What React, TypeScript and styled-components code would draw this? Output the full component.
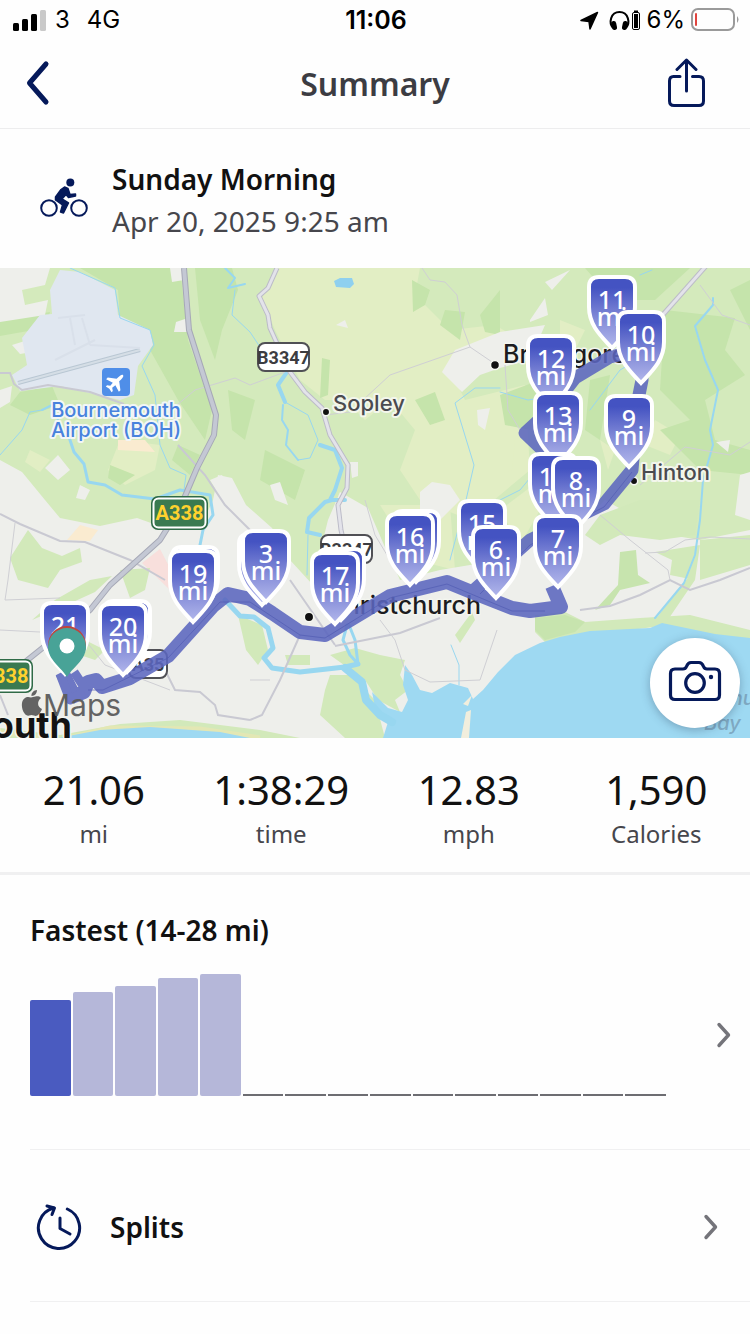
import React from "react";
import styled, { createGlobalStyle } from "styled-components";

const NAVY = "#05195a";
const UI = `"Noto Sans", "Open Sans", sans-serif`;
const SYS = `Inter, "Liberation Sans", sans-serif`;
const ROAD = `"Liberation Sans Narrow", Roboto, sans-serif`;

const GlobalStyle = createGlobalStyle`
  * { box-sizing: border-box; }
  body { margin: 0; background: #fefefe; font-family: ${UI}; color: #111; }
  h1, h2, p, dl, dd, dt { margin: 0; }
  button { border: 0; padding: 0; background: none; font: inherit; color: inherit; cursor: pointer; }
`;

const Screen = styled.main`
  min-height: 100vh;
  background: #fefefe;
`;

const StatusBar = styled.div`
  display: grid;
  grid-template-columns: 1fr auto 1fr;
  align-items: center;
  height: 40px;
  padding: 0 11px 0 13px;
  font: 400 24px/40px ${SYS};
  color: #000;
`;
const StatusSide = styled.div<{ $end?: boolean }>`
  display: flex;
  align-items: center;
  justify-content: ${(p) => (p.$end ? "flex-end" : "flex-start")};
  gap: ${(p) => (p.$end ? 6 : 9)}px;
`;
const Network = styled.span`
  margin-left: 8px;
`;
const Clock = styled.time`
  font-weight: 600;
  font-size: 25px;
`;

const Header = styled.header`
  display: grid;
  grid-template-columns: 1fr auto 1fr;
  align-items: center;
  height: 89px;
  padding: 0 26px;
  border-bottom: 1px solid #ededee;
`;
const Title = styled.h1`
  font-size: 32px;
  line-height: 44px;
  font-weight: 600;
  color: #3c3c42;
`;
const IconButton = styled.button<{ $end?: boolean }>`
  display: flex;
  justify-self: ${(p) => (p.$end ? "end" : "start")};
  && { margin-right: ${(p) => (p.$end ? 19 : 0)}px; }
`;

const Activity = styled.section`
  display: flex;
  align-items: center;
  gap: 24px;
  height: 139px;
  padding: 2px 40px 0;
`;
const ActivityName = styled.h2`
  font-size: 28px;
  line-height: 42px;
  font-weight: 600;
`;
const ActivityDate = styled.p`
  font-size: 28px;
  line-height: 42px;
  color: #46464c;
`;

const MapPanel = styled.section`
  position: relative;
  overflow: hidden;
`;
const MapArt = styled.svg`
  display: block;
  width: 100%;
  height: auto;
`;
const CameraButton = styled.button`
  position: absolute;
  right: 10px;
  bottom: 10px;
  display: flex;
  align-items: center;
  justify-content: center;
  width: 90px;
  height: 90px;
  && { background: #fff; padding-bottom: 4px; }
  border-radius: 50%;
  box-shadow: 0 2px 10px rgba(40, 60, 90, 0.35);
`;

const Stats = styled.dl`
  display: grid;
  grid-template-columns: repeat(4, 1fr);
  padding: 26px 0 20px;
  border-bottom: 3px solid #f0f0f1;
`;
const Stat = styled.div`
  display: flex;
  flex-direction: column-reverse;
  text-align: center;
`;
const StatValue = styled.dd`
  font-size: 40px;
  line-height: 52px;
`;
const StatLabel = styled.dt`
  font-size: 24px;
  line-height: 36px;
  color: #46464c;
`;

const Fastest = styled.section`
  margin-left: 30px;
  padding: 34px 18px 53px 0;
  border-bottom: 1px solid #f0f0f1;
`;
const SectionTitle = styled.h2`
  font-size: 28px;
  line-height: 42px;
  font-weight: 600;
`;
const ChartButton = styled.button`
  display: flex;
  align-items: center;
  justify-content: space-between;
  width: 100%;
  && { margin-top: 23px; }
`;
const Bars = styled.span`
  display: flex;
  align-items: flex-end;
  gap: 2px;
  flex: 1;
  height: 122px;
  margin-right: 50px;
`;
const Bar = styled.span<{ $tone: "best" | "past" | "empty" }>`
  flex: 1;
  border-radius: ${(p) => (p.$tone === "empty" ? 0 : 2)}px;
  background: ${(p) => ({ best: "#4a5bc0", past: "#b5b7d9", empty: "#6d6d72" })[p.$tone]};
`;

const SplitsRow = styled.button`
  display: flex;
  align-items: center;
  gap: 26px;
  width: calc(100% - 30px);
  height: 152px;
  margin-left: 30px;
  && { padding: 2px 31px 0 6px; border-bottom: 1px solid #f0f0f1; }
  text-align: left;
`;
const RowLabel = styled.span`
  flex: 1;
  font-size: 28px;
  line-height: 42px;
  font-weight: 600;
`;

const bars = [96, 104, 110, 118, 122, 2, 2, 2, 2, 2, 2, 2, 2, 2, 2];
const stats = [
  ["21.06", "mi"],
  ["1:38:29", "time"],
  ["12.83", "mph"],
  ["1,590", "Calories"],
];

const Chevron = () => (
  <svg width="16" height="26" viewBox="0 0 16 26" fill="none" stroke="#74747a" strokeWidth="3.4" strokeLinecap="round" strokeLinejoin="round" aria-hidden="true">
    <path d="M3 2.5 L12.5 13 L3 23.5" />
  </svg>
);

/* Mile markers, back to front: label, centre x, top y. Covered markers carry no label. */
const pins: [string, number, number][] = [
  ["11", 612, 275], ["12", 551, 334], ["10", 641, 310], ["13", 558, 391],
  ["14", 553, 452], ["8", 576, 456], ["9", 629, 394], ["7", 558, 514],
  ["15", 482, 499], ["6", 496, 525], ["", 416, 509], ["16", 410, 512],
  ["", 341, 547], ["17", 335, 551], ["", 262, 532], ["3", 266, 529],
  ["", 195, 545], ["19", 193, 549], ["", 127, 599], ["20", 123, 602],
  ["21", 65, 601],
];

const Pin = ({ label, x, y }: { label: string; x: number; y: number }) => (
  <g transform={`translate(${x - 25} ${y})`}>
    <path d="M12 2 H38 Q48 2 48 12 V32 C48 51 35 62 25 73 C15 62 2 51 2 32 V12 Q2 2 12 2Z" fill="url(#pin)" stroke="#fff" strokeWidth="4" />
    {label && (
      <g fill="#fff" fontFamily={UI} fontWeight="500" textAnchor="middle" fontSize="25">
        <text x="25" y="34">{label}</text>
        <text x="25" y="51">mi</text>
      </g>
    )}
  </g>
);

type Plate = { x: number; y: number; w: number; h: number; label: string };

const ARoad = ({ x, y, w, h, label }: Plate) => (
  <g>
    <rect x={x} y={y} width={w} height={h} rx="7" fill="#2f6b47" />
    <rect x={x + 2.5} y={y + 2.5} width={w - 5} height={h - 5} rx="5" fill="#3a7a50" stroke="#fff" strokeWidth="2" />
    <text x={x + w / 2} y={y + h / 2 + 7} textAnchor="middle" fontFamily={ROAD} fontWeight="700" fontSize="20" fill="#ffd22e">{label}</text>
  </g>
);

const BRoad = ({ x, y, w, h, label }: Plate) => (
  <g>
    <rect x={x} y={y} width={w} height={h} rx="7" fill="#fff" stroke="#505055" strokeWidth="2" />
    <text x={x + w / 2} y={y + h / 2 + 7} textAnchor="middle" fontFamily={ROAD} fontWeight="700" fontSize="18" fill="#3c3c40">{label}</text>
  </g>
);

const RouteMap = () => (
  <MapArt viewBox="0 268 750 470" role="img" aria-label="Route map">
    <defs>
      <linearGradient id="pin" x1="0" y1="0" x2="0" y2="1">
        <stop offset="0.15" stopColor="#4453c2" />
        <stop offset="0.6" stopColor="#848cd8" />
        <stop offset="1" stopColor="#b3b8ec" />
      </linearGradient>
    </defs>
    <rect y="268" width="750" height="470" fill="#d4eabc" />

    {/* Meadows */}
    <g fill="#e2eec4">
      <path d="M275 268 H420 L415 295 L450 330 L430 340 L380 345 L375 362 L345 360 L340 305 L345 302 L390 308 L395 340 L450 330 L495 325 L520 340 L450 370 L465 400 L525 385 L530 470 L470 520 L420 500 L400 470 L415 430 L390 400 L365 420 L345 400 L325 400 L300 380 L275 330 L262 298Z" />
      <path d="M120 440 L160 445 L155 470 L125 485 L108 470Z M30 450 L50 460 L40 472 L25 462Z" />
      <path d="M380 505 H450 L455 570 L415 560Z M500 510 L540 480 L540 510 L520 545Z" />
      <path d="M560 320 L585 330 L575 350 L560 345Z M655 420 L680 435 L670 455 L645 445Z M500 430 L515 440 L512 470 L500 475Z M600 440 L615 450 L608 470Z" />
    </g>

    {/* Woodland */}
    <g fill="#c5e4ab">
      <path d="M80 268 H180 L188 340 L212 410 L205 440 L178 400 L150 350 L150 330 L120 318 L118 290Z" />
      <path d="M195 268 H232 L238 290 L222 330 L215 360 L200 320Z M0 320 L50 312 L45 328 L0 336Z" />
      <path d="M20 392 L52 386 L60 405 L30 415 L10 405Z M110 465 L135 475 L120 485 L108 478Z M178 445 L200 455 L190 475 L172 460Z" />
      <path d="M322 358 L330 360 L328 395 L320 398Z M415 400 L435 392 L445 420 L430 425Z" />
      <path d="M412 280 L430 290 L425 305 L413 312Z M445 310 L465 312 L460 340 L440 325Z M480 315 L500 290 V335 L485 332Z M265 450 L305 470 L295 500 L260 480Z" />
      <path d="M585 268 H690 L655 300 L610 300 L600 285Z M665 310 L735 318 L725 350 L745 375 L705 400 L715 440 L750 450 V475 L700 470 L660 430 L690 420 L660 390Z" />
      <path d="M500 395 L540 380 L530 430 L505 425Z M730 290 L750 280 V330Z M590 380 L610 375 L600 440 L585 430Z" />
      <path d="M255 400 L245 440 L232 430 L228 390Z M225 490 L240 510 L232 500Z" />
    </g>

    {/* Built-up land */}
    <g fill="#eeefeb">
      <path d="M0 460 L22 472 L45 500 L60 518 L100 526 L137 518 L165 528 L200 528 L213 500 L218 475 L232 478 L246 505 L272 528 L290 560 L312 584 L328 520 L340 492 L368 508 L384 545 L400 580 L440 570 L500 560 L585 520 L605 500 L640 520 L670 535 L700 540 L750 530 V738 H0Z" />
      <path d="M0 268 H50 L45 285 L22 290 L25 305 L48 300 L45 315 L0 322Z M170 268 H184 V280 L172 282Z M176 322 L188 318 V332 L174 332Z M12 345 L28 340 L32 352 L20 354Z M0 390 L12 386 L10 402 L0 408Z M45 468 L58 455 L70 470 L58 480Z M210 480 L222 475 L232 495 L225 505Z M80 485 L90 490 L85 500 L76 498Z" />
      <path d="M442 372 L455 350 L500 332 L545 325 L530 360 L500 368 L480 375 L462 392Z M545 282 L570 270 L552 290Z M530 320 L545 298 L548 315 L530 322Z M420 492 L432 482 L450 485 L460 500 L440 520 L420 512Z M336 325 L345 320 L348 328Z M477 410 L490 408 L485 430 L478 425Z M716 442 L730 440 L728 452Z M740 475 L750 472 V520 L735 515Z M270 485 L280 482 L288 505 L275 500Z M350 462 L358 462 L358 476 L352 478Z" />
    </g>
    <path d="M80 525 L98 530 L90 541 L67 540Z M118 440 L145 440 L155 452 L118 450Z" fill="#faebd0" />
    <path d="M142 563 L160 549 L172 572 L170 590Z" fill="#f8dfdc" />

    {/* Parks inside the towns */}
    <g fill="#d2e9ba">
      <path d="M10 558 L28 530 L42 548 L62 556 L80 548 L82 562 L60 570 L48 588 L18 580Z M55 600 L90 580 L112 576 L95 592 L60 608 L32 620Z M120 570 L150 568 L145 590 L130 598Z M85 640 L105 650 L95 660 L80 655Z" />
      <path d="M0 738 V728 L60 735 L120 724 L180 720 L260 730 L300 738Z" />
      <path d="M238 615 L262 625 L268 650 L258 665 L246 650Z M285 655 L310 655 V665 L288 665Z M330 655 L355 648 L380 655 L405 660 L400 675 L408 690 L395 700 L400 712 L378 700 L365 680Z M325 690 L330 675 L350 675 L375 700 L385 738 H345 L320 715Z" />
      <path d="M600 515 L640 500 H700 L695 535 L660 540 L620 535 L600 545 L585 535Z M655 552 L700 545 L695 580 L670 575 L672 560Z M700 540 L750 535 V565 L700 580Z" />
      <path d="M535 615 L565 612 L585 622 L640 618 L690 615 L750 630 V640 L660 626 L545 642 L535 632Z" />
      <path d="M455 635 L472 612 L475 620 L460 643Z M690 575 L655 620 L665 624 L695 580Z" />
    </g>
    <path d="M620 552 L636 550 L638 575 L650 583 L620 590 L610 605 L595 610 L618 585Z M535 618 L565 615 L585 622 L575 632 L545 640 L535 630Z" fill="#c7e4ae" />
    <path d="M0 732 L60 740 L110 728 L200 729 L260 738" stroke="#e3e7b4" strokeWidth="5" fill="none" />

    {/* Airport */}
    <path d="M60 270 L80 272 L115 290 L118 315 L150 330 L153 345 L138 366 L134 395 L120 400 L60 386 L20 391 L12 375 L27 365 L22 338 L40 315 L52 314 L50 290Z" fill="#e0e7f0" />
    <path d="M18 383 L140 350" stroke="#b9c7d3" strokeWidth="4" />
    <path d="M18 383 L140 350" stroke="#d5dee6" strokeWidth="2" />
    <path d="M58 318 L85 315 M70 318 L75 345 M82 318 L90 345 M55 360 L95 340 M90 345 L140 348" stroke="#d9e0ea" strokeWidth="2" fill="none" />

    {/* Sea, harbour and rivers */}
    <path d="M750 638 L715 634 L662 623 L650 628 L590 631 L560 637 L540 643 L515 655 L498 672 L483 690 L473 699 L468 688 L450 683 L432 693 L420 690 L412 675 L405 665 L403 685 L408 700 L402 712 L388 708 L372 692 L376 712 L388 722 L383 738 H750Z" fill="#9ed9f2" />
    <path d="M58 738 L100 730 L150 727 L220 732 L250 738Z" fill="#9ed9f2" />
    <g fill="none" stroke="#98d7f0" strokeLinejoin="round" strokeLinecap="round">
      <path strokeWidth="8" d="M345 668 L362 682 L366 700 L380 715 L392 722" />
      <path strokeWidth="5" d="M225 600 L240 616 L254 617 L268 628 L273 648 L264 658 L272 668 L300 672 L345 667 L358 664" />
      <path strokeWidth="3" d="M70 440 L74 452 L84 464 L88 482 L105 485 L122 495 L155 499 L180 490 L210 495 L213 515 L203 530 L200 545 M347 625 L343 640 L350 655 L358 664 L355 640 L349 625" />
      <path strokeWidth="4" d="M345 500 L332 500 L325 502 L309 518 L307 532 L320 535 M287 372 L278 385 L285 402 M320 445 L335 450 L342 468 L335 490 L330 500" />
      <path strokeWidth="1" d="M285 402 L308 415 L318 440 L310 458 L298 460 M308 535 L307 575 M0 455 L22 430 L30 412 L42 410 M70 268 L115 288 L120 318 L150 330 L154 345 L142 366 L155 395 L160 445 L170 468 L186 475 L184 490" />
      <path strokeWidth="2" d="M283 405 L282 420 L288 430 L286 445 L298 460 M42 410 L52 405 L60 425 L70 440 M225 268 L235 278 L228 288 L245 284" />
      <path strokeWidth="1" d="M235 290 L232 315 L250 332 L262 350 M500 388 L475 388 L455 403 L474 465 L466 500 L450 560 M500 392 L528 400 L560 395 M655 350 L620 370 L590 410 M640 275 L652 270 M451 645 L459 665 V685 M500 500 L520 490 L530 478" />
      <path strokeWidth="2" d="M713 298 L713 305 L695 326 L705 360 L718 390 L710 430 L713 445 L703 480 L700 520 L695 555 L684 583 L655 618" />
    </g>
    <path d="M334 281 L340 278 H352 L354 284 L350 288 L336 287Z" fill="#8fd0ef" />
    <path d="M461 738 L466 712 L471 710 L469 738Z M463 704 L472 695 L468 706Z" fill="#f1eedd" />

    {/* Minor roads */}
    <g fill="none" stroke="#c9c9d2" strokeWidth="2">
      <path d="M0 373 L10 373 L14 384 L22 390 L48 385 L90 392 L124 404 M0 514 L20 524 L60 541 L85 542 L130 560 L165 580 M178 445 L205 475 L225 505 L250 530 M290 580 L335 645" />
      <path d="M0 695 L8 715 M160 660 L175 690 L200 692 L215 705 L218 715 L250 720" />
      <path d="M250 720 L262 715 L280 680 L300 635 M335 646 L400 633 L440 618 M580 610 L610 606 L640 595 L670 580 L690 590 L720 580 L750 568" />
    </g>
    <g fill="none" stroke="#cfcfd4" strokeWidth="1">
      <path d="M165 415 L195 390 L235 378 L250 385 L285 372 M15 523 L8 580 L5 600 L60 598 M0 630 L40 632 M85 640 L105 665 L170 690 M250 680 H270" />
      <path d="M325 415 L350 412 L390 375 L470 347 L495 364 M422 268 L430 280 L445 282 L457 295 L462 325 L470 347" />
      <path d="M600 515 L630 540 L668 570 L670 580 M645 553 L665 552 L685 540 L710 537 L750 539" />
      <path d="M365 500 L375 535 L390 560 L410 585 M380 620 L395 640 L405 670 L430 682 L480 680 L497 630" />
      <path d="M700 285 L722 315 L750 325 M640 485 L685 447 L730 455 L750 442 M505 365 L508 410 L520 430" />
    </g>

    {/* Main roads */}
    <g fill="none" strokeLinejoin="round">
      <path d="M277 268 L268 288 L259 296 L268 315 L270 328 L290 372 L305 392 L322 408 L330 435 L348 465 L347 488 L338 505 L341 530 L348 560" stroke="#bcbcc8" strokeWidth="5" />
      <path d="M277 268 L268 288 L259 296 L268 315 L270 328 L290 372 L305 392 L322 408 L330 435 L348 465 L347 488 L338 505 L341 530 L348 560" stroke="#e3e3ea" strokeWidth="3" />
      <path d="M706 266 L660 318" stroke="#bcbcc8" strokeWidth="5" />
      <path d="M706 266 L660 318" stroke="#e3e3ea" strokeWidth="3" />
      <path d="M184 268 L189 330 L216 415 L214 435 L197 468 L180 508 L160 540 L110 585 L90 610 L40 650 L0 682" stroke="#a6a8b6" strokeWidth="6" />
      <path d="M184 268 L189 330 L216 415 L214 435 L197 468 L180 508 L160 540 L110 585 L90 610 L40 650 L0 682" stroke="#c4c8d4" strokeWidth="4" />
    </g>

    {/* Place names and road numbers */}
    <rect x="102" y="368" width="28" height="28" rx="4" fill="#4f8ee8" />
    <path transform="translate(116 382) rotate(45) scale(0.9)" d="M0 -11 C1.6 -11 2 -8.5 2 -6 V-3 L10 3 V5.5 L2 3 L1.5 7.5 L4.500 9.5 V11.5 L0 10.5 L-4.5 11.5 V9.5 L-1.5 7.5 L-2 3 L-10 5.5 V3 L-2 -3 V-6 C-2 -8.5 -1.6 -11 0 -11Z" fill="#fff" />
    <g fontFamily={SYS} strokeLinejoin="round" paintOrder="stroke">
      <g fontSize="20" fontWeight="500" fill="#4882dd" stroke="#f2f6f6" strokeWidth="4" textAnchor="middle">
        <text x="116" y="417">Bournemouth</text>
        <text x="116" y="437">Airport (BOH)</text>
      </g>
      <g fontSize="22" fontWeight="500" fill="#4b4b50" stroke="#f3f6ec" strokeWidth="4">
        <text x="333" y="411">Sopley</text>
        <text x="641" y="480">Hinton</text>
      </g>
      <g fontSize="25" fontWeight="500" fill="#1c1c1e" stroke="#f3f5ef" strokeWidth="3">
        <text x="503" y="363">Bransgore</text>
        <text x="481" y="614" textAnchor="end">Christchurch</text>
      </g>
      <g fontSize="20" fontStyle="italic" fontWeight="500" fill="#7fa9c2">
        <text x="662" y="705">Christchurch</text>
        <text x="704" y="730">Bay</text>
      </g>
      <text x="72" y="738" fontSize="36" fontWeight="700" fill="#121212" stroke="#f3f5ef" strokeWidth="3" textAnchor="end">Bournemouth</text>
    </g>
    <g fill="#111" stroke="#f6f8f2" strokeWidth="1.5">
      <circle cx="495" cy="365" r="4.5" />
      <circle cx="326" cy="412" r="3.7" />
      <circle cx="634" cy="481" r="3.7" />
      <circle cx="309" cy="617" r="4.7" />
    </g>
    <BRoad x={258} y={343} w={51} h={28} label="B3347" />
    <BRoad x={321} y={535} w={51} h={28} label="B3347" />
    <BRoad x={129} y={650} w={38} h={28} label="A35" />
    <ARoad x={151} y={496} w={57} h={34} label="A338" />
    <ARoad x={-24} y={659} w={57} h={34} label="A338" />

    {/* Ridden track */}
    <g opacity="0.88" fill="none" stroke="#5c67bf" strokeLinejoin="round">
      <path strokeWidth="14" d="M62 672 L74 696 L84 692 L88 682 L96 680 L102 687 L130 678 L168 656 L213 606 L228 594 L250 599 L272 613 L300 632 L325 635 L355 617 L390 596 L447 582 L474 593 L512 608 L530 611 L561 607 L552 586" />
      <path strokeWidth="13" d="M474 590 L530 540 L575 518 L604 504 L632 470 L638 400 L642 380 L641 350 L610 357 L575 378 L550 410 L525 433 L548 455 L555 520" />
      <path strokeWidth="9" d="M60 674 L70 700 L84 692 M86 690 L74 672" />
    </g>
    <g fill="none" stroke="#525db4" strokeWidth="1" opacity="0.7">
      <path d="M88 690 L103 690 L168 658 L220 602 L250 602 L300 635 L325 638 L390 598 L447 584 L512 611 L545 611" />
      <path d="M480 594 L530 545 L604 507 L632 472" />
    </g>

    {pins.map(([label, x, y]) => (
      <Pin key={`${x}-${y}`} label={label} x={x} y={y} />
    ))}

    {/* Start and finish */}
    <path d="M67 675 C62 666 48 658 48 645 A19 19 0 0 1 86 645 C86 658 72 666 67 675Z" fill="#c0453c" />
    <path d="M67 677 C62 668 48 660 48 647 A19 19 0 0 1 86 647 C86 660 72 668 67 677Z" fill="#48a397" />
    <circle cx="67" cy="646" r="7.5" fill="#fff" />

    {/* Map provider mark */}
    <g fill="#5c5c5c" opacity="0.95">
      <path d="M33 697 C36 697 38 695 41 698 C37 701 37 707 42 709 C40 714 37 717 34 715.5 C32 714.7 31 714.7 29 715.5 C25 717 21 709 22 703 C23 697 28 696 31 697.5Z M31.5 696 C31 693 34 690 37 690 C37 693 35 696 31.5 696Z" />
      <text x="43" y="716" fontFamily={SYS} fontSize="30">Maps</text>
    </g>
  </MapArt>
);

export default function App() {
  return (
    <>
      <GlobalStyle />
      <Screen>
        <StatusBar>
          <StatusSide>
            <svg width="33" height="22" viewBox="0 0 33 22" aria-hidden="true">
              <rect x="0" y="14" width="6" height="8" rx="1.5" />
              <rect x="9" y="10" width="6" height="12" rx="1.5" />
              <rect x="18" y="5" width="6" height="17" rx="1.5" />
              <rect x="27" y="1" width="6" height="21" rx="1.5" fill="#c9c9c9" />
            </svg>
            <span>3</span>
            <Network>4G</Network>
          </StatusSide>
          <Clock>11:06</Clock>
          <StatusSide $end>
            <svg width="62" height="22" viewBox="0 0 62 22" aria-hidden="true">
              <path d="M2 11.5 L18.500 3.500 L11 20 L10 12.500Z" fill="#000" stroke="#000" strokeWidth="1.5" strokeLinejoin="round" />
              <path d="M34 19 C29.5 14 31.5 3 40.5 3 C49.5 3 51.5 14 47 19" fill="none" stroke="#000" strokeWidth="2" />
              <rect x="32.5" y="12" width="5" height="9" rx="2.5" transform="rotate(-12 35 16)" />
              <rect x="43.5" y="12" width="5" height="9" rx="2.5" transform="rotate(12 46 16)" />
              <rect x="53.5" y="3.5" width="7" height="17" rx="1.5" fill="none" stroke="#000" />
              <rect x="55" y="5" width="4" height="14" />
              <rect x="55" y="1.5" width="4" height="2" />
            </svg>
            <span>6%</span>
            <svg width="48" height="24" viewBox="0 0 48 24" aria-hidden="true">
              <rect x="1" y="1" width="42" height="21" rx="6" fill="none" stroke="#9a9a9a" strokeWidth="2" />
              <rect x="4" y="5" width="2" height="13" rx="1" fill="#e0443e" />
              <path d="M46 8 Q49 11.5 46 15Z" fill="#9a9a9a" />
            </svg>
          </StatusSide>
        </StatusBar>

        <Header>
          <IconButton aria-label="Back">
            <svg width="24" height="52" viewBox="0 0 24 52" fill="none" stroke={NAVY} strokeWidth="5" strokeLinecap="round" strokeLinejoin="round">
              <path d="M20 6 L3.5 25 L20 44" />
            </svg>
          </IconButton>
          <Title>Summary</Title>
          <IconButton $end aria-label="Share">
            <svg width="38" height="52" viewBox="0 0 38 52" fill="none" stroke={NAVY} strokeWidth="3" strokeLinecap="round" strokeLinejoin="round">
              <path d="M13 18.5 H6.5 Q2.5 18.5 2.5 23 V43 Q2.5 47.5 7 47.5 H32 Q36.5 47.5 36.5 43 V23 Q36.5 18.5 32 18.5 H25.5" />
              <path d="M19.5 33 V2 M10 11.5 L19.5 2 L29 11.5" />
            </svg>
          </IconButton>
        </Header>

        <Activity>
          <svg width="48" height="44" viewBox="0 0 48 44" aria-hidden="true">
            <g fill="none" stroke={NAVY} strokeWidth="2">
              <circle cx="9" cy="30" r="7.8" />
              <circle cx="39" cy="30" r="7.8" />
            </g>
            <circle cx="30.3" cy="4.5" r="4" fill={NAVY} />
            <path d="M21 11.500 L24.5 9 L28 10.500 L30 16.500 L35.500 16 V18 L28.500 19.500 L26 16.500 L22 21 L28.500 25 L23.500 35 L20.500 34 L22.500 27 L15.500 22 L15.500 19Z" fill={NAVY} stroke={NAVY} strokeWidth="1.5" strokeLinejoin="round" />
          </svg>
          <div>
            <ActivityName>Sunday Morning</ActivityName>
            <ActivityDate>Apr 20, 2025 9:25 am</ActivityDate>
          </div>
        </Activity>

        <MapPanel>
          <RouteMap />
          <CameraButton aria-label="Add photo">
            <svg width="54" height="42" viewBox="0 0 54 42" fill="none" stroke={NAVY} strokeWidth="3.2" strokeLinejoin="round">
              <path d="M7 9 H15 Q17.5 9 18.5 6.5 Q20 2.5 23 2.5 H31 Q34 2.5 35.5 6.5 Q36.5 9 39 9 H47 Q51.5 9 51.5 13.5 V35 Q51.5 39.5 47 39.5 H7 Q2.5 39.5 2.5 35 V13.5 Q2.5 9 7 9Z" />
              <circle cx="27" cy="23" r="9.3" />
              <circle cx="43" cy="17" r="2.2" fill={NAVY} stroke="none" />
            </svg>
          </CameraButton>
        </MapPanel>

        <Stats>
          {stats.map(([value, label]) => (
            <Stat key={label}>
              <StatLabel>{label}</StatLabel>
              <StatValue>{value}</StatValue>
            </Stat>
          ))}
        </Stats>

        <Fastest>
          <SectionTitle>Fastest (14-28 mi)</SectionTitle>
          <ChartButton aria-label="Fastest rides">
            <Bars>
              {bars.map((height, i) => (
                <Bar key={i} $tone={i === 0 ? "best" : height > 2 ? "past" : "empty"} style={{ height }} />
              ))}
            </Bars>
            <Chevron />
          </ChartButton>
        </Fastest>

        <SplitsRow>
          <svg width="48" height="48" viewBox="0 0 48 48" fill="none" stroke={NAVY} strokeWidth="3" strokeLinecap="round" strokeLinejoin="round" aria-hidden="true">
            <path d="M31.3 6 A20.6 20.6 0 1 1 17.500 5" />
            <path d="M11 3 L18.500 5 L16 11.500" />
            <path d="M24 15 V25.500 L34 31" />
          </svg>
          <RowLabel>Splits</RowLabel>
          <Chevron />
        </SplitsRow>
      </Screen>
    </>
  );
}
